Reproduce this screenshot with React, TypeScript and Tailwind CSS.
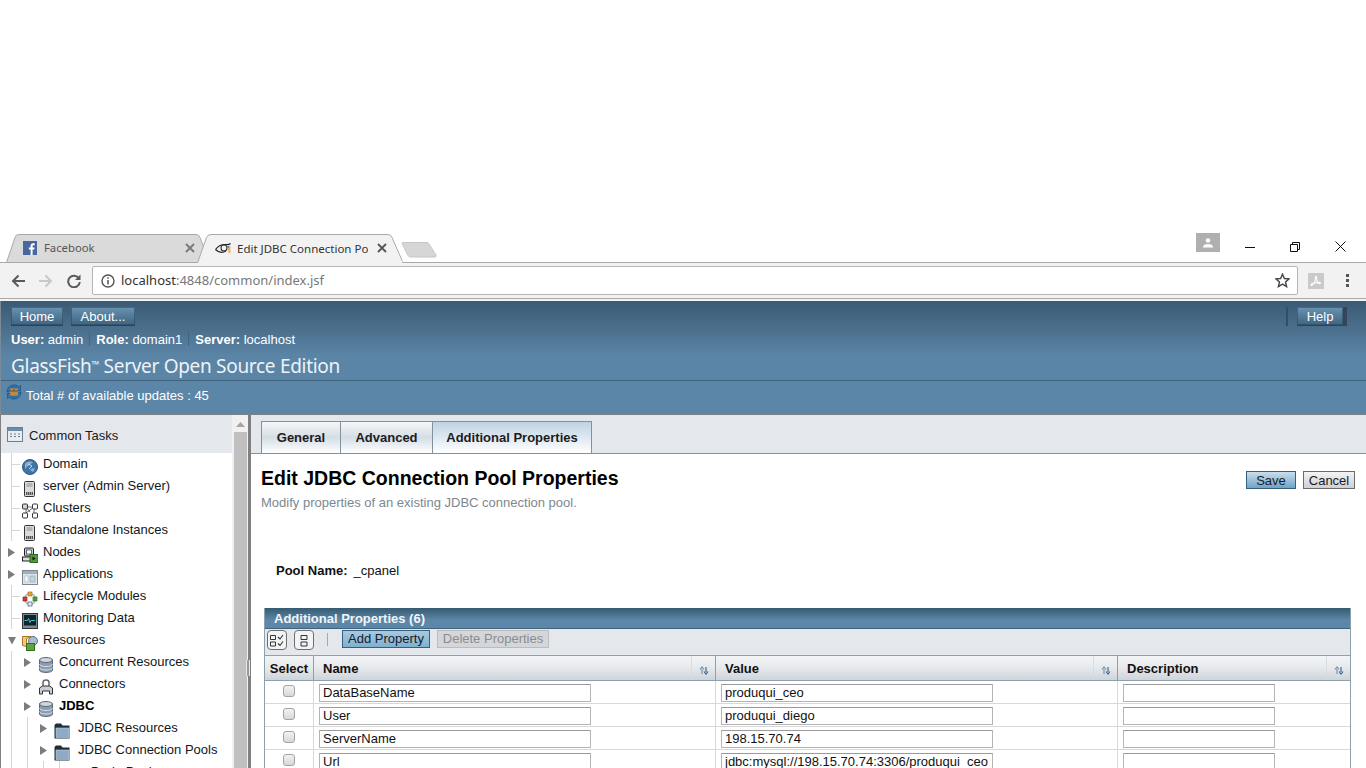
import React from "react";

const Facebook = () => (
  <svg width="14" height="14" viewBox="0 0 14 14" className="shrink-0">
    <rect width="14" height="14" fill="#4a66a0" />
    <path d="M9.6 14V8.6h1.7l.3-2.1h-2V5.2c0-.6.2-1 1-1h1.1V2.3c-.2 0-.8-.1-1.5-.1-1.6 0-2.6 1-2.6 2.7v1.6H5.8v2.1h1.8V14z" fill="#fff" />
  </svg>
);
const EyeFav = () => (
  <svg width="16" height="16" viewBox="0 0 16 16" className="shrink-0">
    <path d="M.5 9.5C3 6 6 4.5 10 4.5c2 0 4 .5 5.5-1" fill="none" stroke="#222" strokeWidth="1.2" />
    <path d="M.5 9.5c3 3 7 3.5 10.500 1.500" fill="none" stroke="#222" strokeWidth="1.2" />
    <circle cx="9" cy="8" r="3" fill="none" stroke="#333" strokeWidth="1.1" />
    <path d="M12.500 6h3v7h-2z" fill="#eeb26a" />
    <circle cx="13" cy="7" r="1.200" fill="#5c8fc4" />
  </svg>
);
const X = ({ c = "#5f6368" }: { c?: string }) => (
  <svg width="10" height="10" viewBox="0 0 10 10" className="shrink-0">
    <path d="M1 1l8 8M9 1l-8 8" stroke={c} strokeWidth="1.800" />
  </svg>
);

const Arrow = ({ down }: { down?: boolean }) => (
  <svg width="8" height="9" viewBox="0 0 8 9" className="shrink-0">
    {down ? <path d="M0 1h8L4 8.500z" fill="#7c7c7c" /> : <path d="M0 0l7 4.500L0 9z" fill="#7c7c7c" />}
  </svg>
);

const I = ({ children }: { children: React.ReactNode }) => (
  <svg width="16" height="16" viewBox="0 0 16 16" className="shrink-0 mt-[6px]">{children}</svg>
);
const Globe = () => (
  <I>
    <circle cx="8" cy="8" r="7.500" fill="#3f74a8" stroke="#2f5a85" />
    <path d="M3 5c2-3 7-3 8-1-2 0-3 2-5 3s-2 4-3 2z" fill="#8fb0cc" />
    <path d="M8 11l3-2 2 1-2 3z" fill="#8fb0cc" />
    <path d="M6 5l4 2-3 3" fill="none" stroke="#e8f0f6" strokeWidth=".8" />
  </I>
);
const Server = () => (
  <I>
    <rect x="2.500" y="0.500" width="10" height="15" rx="1" fill="#d9dcdf" stroke="#333" />
    <path d="M4.500 3h6M4.500 5h6" stroke="#8a8f94" />
    <path d="M4 11h7v3H4z" fill="#555" />
    <path d="M5.500 11v3M7.500 11v3M9.500 11v3" stroke="#ccc" strokeWidth=".6" />
  </I>
);
const Clusters = () => (
  <I>
    <path d="M4 4h8M4 4l4 5M12 4l-8 6M12 4v6M4 4v6" stroke="#444" strokeWidth=".8" fill="none" />
    <rect x="0.500" y="1" width="5" height="5" rx="1" fill="#cfd6dc" stroke="#333" />
    <rect x="10.500" y="1" width="5" height="5" rx="1" fill="#fff" stroke="#333" />
    <rect x="0.500" y="10" width="5" height="5" rx="1" fill="#fff" stroke="#333" />
    <rect x="10.500" y="10" width="5" height="5" rx="1" fill="#fff" stroke="#333" />
  </I>
);
const Nodes = () => (
  <I>
    <rect x="2.500" y="1" width="9" height="8" rx="1" fill="#c7d0d8" stroke="#222" />
    <rect x="4.500" y="3" width="5" height="4" fill="#fff" stroke="#333" strokeWidth=".7" />
    <rect x="0.500" y="10" width="10" height="4" fill="#ddd" stroke="#222" />
    <rect x="8" y="7.500" width="8" height="8" fill="#4d9a3b" stroke="#2a6a20" />
    <path d="M10.500 9.500l3 2-3 2z" fill="#111" />
  </I>
);
const Apps = () => (
  <I>
    <rect x="0.500" y="1.500" width="15" height="14" fill="#dfe4e9" stroke="#7d8790" />
    <rect x="1" y="2" width="14" height="3" fill="#9fb0bf" />
    <rect x="3" y="7" width="3" height="6" fill="#fff" stroke="#aab2b9" strokeWidth=".6" />
    <rect x="8" y="7" width="5" height="6" fill="#c3d2de" stroke="#8ea0ae" strokeWidth=".6" />
  </I>
);
const Lifecycle = () => (
  <I>
    <circle cx="8" cy="8" r="5.500" fill="none" stroke="#9aa5ad" strokeWidth="1.200" />
    <rect x="6" y="1" width="4" height="4" fill="#eea52f" stroke="#94631a" strokeWidth=".6" />
    <rect x="1" y="6" width="4" height="4" fill="#d23a2e" stroke="#7e1c16" strokeWidth=".6" />
    <rect x="11" y="6" width="4" height="4" fill="#47a23c" stroke="#25651e" strokeWidth=".6" />
    <rect x="6" y="11" width="4" height="4" fill="#dfe8ef" stroke="#4b7196" strokeWidth=".8" />
  </I>
);
const Monitor = () => (
  <I>
    <rect x="0.500" y="0.500" width="15" height="15" fill="#7c8a94" stroke="#333" />
    <rect x="2" y="2" width="12" height="10.500" fill="#10222c" />
    <path d="M2.500 7.500h3l1-2 1.500 4 1-2h4" fill="none" stroke="#39c6c9" />
  </I>
);
const Resources = () => (
  <I>
    <path d="M.5 1.500v9l4 1v-8l5-2z" fill="#f3c878" stroke="#a97a22" />
    <circle cx="11" cy="6" r="4.500" fill="#a8bdcf" stroke="#5d7386" />
    <rect x="4.500" y="8.500" width="8" height="7" fill="#5ea43f" stroke="#356f1e" />
  </I>
);
const Db = () => (
  <I>
    <path d="M1.500 3v10c0 1.400 2.900 2.500 6.500 2.500s6.500-1.100 6.500-2.500V3z" fill="#8a9cae" stroke="#59687a" />
    <ellipse cx="8" cy="3" rx="6.500" ry="2.500" fill="#cdd6df" stroke="#59687a" />
    <path d="M1.500 7c0 1.400 2.900 2.500 6.500 2.500s6.500-1.100 6.500-2.500M1.500 10.500c0 1.400 2.900 2.500 6.500 2.500s6.500-1.100 6.500-2.500" fill="none" stroke="#dfe6ec" />
  </I>
);
const Connector = () => (
  <I>
    <path d="M5 7V3.500C5 2 6 1 8 1s3 1 3 2.500V7" fill="none" stroke="#666" strokeWidth="1.500" />
    <path d="M1.500 15V9l3-2h7l3 2v6h-3v-3h-7v3z" fill="#c9ced3" stroke="#333" />
  </I>
);
const Folder = () => (
  <I>
    <path d="M.5 15.500V2l1.500-1.500h5l1.500 2h7v13z" fill="#1f2f3a" />
    <path d="M2 14.500V5h13v9.500z" fill="#8eaac4" stroke="#c6d5e2" strokeWidth=".6" />
  </I>
);
const Pool = () => (
  <I>
    <ellipse cx="8" cy="4" rx="6" ry="2.500" fill="#b9c4ce" stroke="#59687a" />
  </I>
);

type Row = {
  label: string;
  icon: React.ReactNode;
  pad: string;
  arrow?: "r" | "d";
  v?: number[];
  h?: [number, number];
  bold?: boolean;
};
const rows: Row[] = [
  { label: "Domain", icon: <Globe />, pad: "pl-[21px]", v: [11], h: [11, 20] },
  { label: "server (Admin Server)", icon: <Server />, pad: "pl-[21px]", v: [11], h: [11, 20] },
  { label: "Clusters", icon: <Clusters />, pad: "pl-[21px]", v: [11], h: [11, 20] },
  { label: "Standalone Instances", icon: <Server />, pad: "pl-[21px]", v: [11], h: [11, 20] },
  { label: "Nodes", icon: <Nodes />, pad: "pl-[7px]", arrow: "r" },
  { label: "Applications", icon: <Apps />, pad: "pl-[7px]", arrow: "r" },
  { label: "Lifecycle Modules", icon: <Lifecycle />, pad: "pl-[21px]", v: [11], h: [11, 20] },
  { label: "Monitoring Data", icon: <Monitor />, pad: "pl-[21px]", v: [11], h: [11, 20] },
  { label: "Resources", icon: <Resources />, pad: "pl-[7px]", arrow: "d" },
  { label: "Concurrent Resources", icon: <Db />, pad: "pl-[23px]", arrow: "r", v: [11] },
  { label: "Connectors", icon: <Connector />, pad: "pl-[23px]", arrow: "r", v: [11] },
  { label: "JDBC", icon: <Db />, pad: "pl-[23px]", arrow: "r", v: [11], bold: true },
  { label: "JDBC Resources", icon: <Folder />, pad: "pl-[39px]", arrow: "r", v: [11, 27] },
  { label: "JDBC Connection Pools", icon: <Folder />, pad: "pl-[39px]", arrow: "r", v: [11, 27] },
  { label: "DerbyPool", icon: <Pool />, pad: "pl-[69px]", v: [11, 27, 43, 59] },
];

const TreeRow = ({ r }: { r: Row }) => {
  const level3 = r.pad === "pl-[39px]";
  return (
    <div className={`relative flex h-[22px] shrink-0 items-start ${r.pad}`}>
      <svg className="absolute left-[-1px] top-0 pointer-events-none" width="70" height="22">
        {r.v?.map((x) => <line key={x} x1={x + 0.5} x2={x + 0.5} y1="0" y2="22" stroke="#d6d6d6" />)}
        {r.h && <line x1={r.h[0]} x2={r.h[1]} y1="11.500" y2="11.500" stroke="#d6d6d6" />}
      </svg>
      {r.arrow && (
        <span className="relative mt-[7px] flex w-[14px] shrink-0">
          <Arrow down={r.arrow === "d"} />
        </span>
      )}
      <span className="relative flex">{r.icon}</span>
      <span
        className={`relative whitespace-nowrap pt-[2px] text-[13px] leading-[18px] text-[#101820] ${level3 ? "pl-[8px]" : "pl-[5px]"} ${r.bold ? "font-bold text-black" : ""}`}
      >
        {r.label}
      </span>
    </div>
  );
};

const MastBtn = ({ children, w }: { children: React.ReactNode; w: string }) => (
  <div
    className={`flex h-[19px] ${w} items-center justify-center border-b border-[#24455e] bg-gradient-to-b from-[#6b94b3] to-[#3d6480] text-[13px] leading-none text-white shadow-[inset_0_0_0_1px_rgba(40,70,95,.55)]`}
  >
    {children}
  </div>
);

const Tab = ({ children, w, active }: { children: React.ReactNode; w: string; active?: boolean }) => (
  <div
    className={`flex h-[32px] ${w} items-center justify-center border border-b-0 border-[#7f929e] -ml-px first:ml-0 bg-gradient-to-b text-[13px] font-bold text-[#1c1c1c] ${active ? "from-[#bfd2e2] to-white" : "from-[#f6f7f9] via-[#d5dde5] to-white"}`}
  >
    {children}
  </div>
);

const SortIcon = () => (
  <svg width="10" height="9" viewBox="0 0 10 9" className="shrink-0">
    <path d="M3 8V3M1 3.500L3 1l2 2.500" fill="none" stroke="#6d8ea8" strokeWidth="1.100" />
    <path d="M7 1v5M5 5.500L7 8l2-2.500" fill="none" stroke="#2f5f8c" strokeWidth="1.100" />
  </svg>
);

const HeadCell = ({ children, pad, sort }: { children: React.ReactNode; pad?: string; sort?: boolean }) => (
  <div className="flex h-full items-stretch border-r border-[#8ea0ac] last:border-r-0">
    <div className={`flex flex-1 items-center pt-[1px] text-[13px] font-bold text-[#111] ${pad ?? ""}`}>{children}</div>
    {sort && (
      <div className="flex w-[24px] items-center justify-center border-l border-[#d8dde2] pt-[5px]">
        <SortIcon />
      </div>
    )}
  </div>
);

const Field = ({ value, w }: { value: string; w: string }) => (
  <div className={`mt-[1px] flex h-[18px] ${w} items-center overflow-hidden border border-[#b5b5b5] border-t-[#9a9a9a] bg-white pl-[3px] text-[13px] leading-none whitespace-nowrap text-[#111]`}>
    {value}
  </div>
);

const Check = () => (
  <span className="mt-[-3px] block h-[12px] w-[12px] rounded-[3px] border border-[#a3a3a3] bg-gradient-to-b from-[#f2f2f2] to-[#d8d8d8]" />
);

const data = [
  ["DataBaseName", "produqui_ceo"],
  ["User", "produqui_diego"],
  ["ServerName", "198.15.70.74"],
  ["Url", "jdbc:mysql://198.15.70.74:3306/produqui_ceo"],
];

export default function App() {
  return (
    <div className="flex h-[768px] w-[1366px] flex-col overflow-hidden bg-white font-['Liberation_Sans',Arial,sans-serif]">
      <div className="h-[233px] shrink-0 bg-white" />

      {/* Tab strip */}
      <div className="relative z-10 flex h-[29px] shrink-0 items-start font-['Noto_Sans',sans-serif]">
        <svg className="absolute left-0 top-0" width="440" height="30" viewBox="0 0 440 30">
          <path d="M6.500 29.500L15 4.500Q15.500 1.500 19 1.500H196Q199 1.500 200 4.500L205 18L201 29.500Z" fill="#dadada" stroke="#a9a9a9" />
          <path d="M197.500 30L206.500 4.500Q207.500 1.500 211 1.500H388Q391 1.500 392 4.500L402.500 30Z" fill="#f2f2f2" />
          <path d="M197.500 30L206.500 4.500Q207.500 1.500 211 1.500H388Q391 1.500 392 4.500L402.500 28.500" fill="none" stroke="#a9a9a9" />
          <path d="M402 10.500Q402 9.500 403 9.500H427Q428 9.500 429 11L436 22Q436.500 24 435 24H411Q409 24 408 22.500Z" fill="#d6d6d6" stroke="#c6c6c6" />
        </svg>
        <div className="relative ml-[23px] mt-[8px] flex w-[172px] items-center">
          <Facebook />
          <span className="ml-[7px] flex-1 text-[11.3px] leading-[14px] text-[#555]">Facebook</span>
          <X c="#777" />
        </div>
        <div className="relative ml-[20px] mt-[7px] flex w-[173px] items-center">
          <EyeFav />
          <span className="ml-[6px] w-[131px] overflow-hidden text-[11.5px] leading-[15px] whitespace-nowrap text-[#333]">Edit JDBC Connection Po</span>
          <span className="ml-[9px]"><X c="#555" /></span>
        </div>
        <div className="flex-1" />
        <div className="relative flex h-[19px] w-[24px] items-center justify-center bg-[#b0b0b0]">
          <svg width="12" height="10" viewBox="0 0 12 10">
            <circle cx="6" cy="2.500" r="2.200" fill="#fff" />
            <path d="M1 9.500c0-2.500 2.500-3.500 5-3.500s5 1 5 3.500z" fill="#fff" />
          </svg>
        </div>
        <div className="relative flex w-[146px] items-center justify-between pl-[25px] pr-[20px] pt-[8px]">
          <svg width="10" height="10" viewBox="0 0 10 10"><path d="M0 5.500h10" stroke="#111" /></svg>
          <svg width="10" height="10" viewBox="0 0 10 10"><path d="M.5 2.500h7v7h-7zM2.500 2.500v-2h7v7h-2" fill="none" stroke="#111" /></svg>
          <svg width="11" height="11" viewBox="0 0 11 11"><path d="M.5.500l10 10M10.500.500l-10 10" stroke="#111" /></svg>
        </div>
      </div>

      {/* Toolbar */}
      <div className="flex h-[37px] shrink-0 items-center border-y border-[#a9a9a9] bg-[#f2f2f2] font-['Noto_Sans',sans-serif]">
        <div className="ml-[11px] flex w-[81px] items-center gap-[14px]">
          <svg width="14" height="14" viewBox="0 0 14 14"><path d="M14 7H2M7.500 1.500L2 7l5.500 5.500" fill="none" stroke="#5a5a5a" strokeWidth="2" /></svg>
          <svg width="14" height="14" viewBox="0 0 14 14"><path d="M0 7h12M6.500 1.500L12 7l-5.500 5.500" fill="none" stroke="#c8c8c8" strokeWidth="2" /></svg>
          <svg width="14" height="14" viewBox="0 0 14 14"><path d="M12 4.500A5.800 5.800 0 1 0 12.800 8" fill="none" stroke="#5a5a5a" strokeWidth="2" /><path d="M13.500.500v5.500H8z" fill="#5a5a5a" /></svg>
        </div>
        <div className="flex h-[29px] w-[1206px] items-center rounded-[2px] border border-[#b5b5b5] bg-white pl-[8px] pr-[7px]">
          <svg width="14" height="14" viewBox="0 0 14 14" className="shrink-0">
            <circle cx="7" cy="7" r="6" fill="none" stroke="#555" strokeWidth="1.400" />
            <path d="M7 6v4.500M7 3.200v1.600" stroke="#555" strokeWidth="1.500" />
          </svg>
          <span className="ml-[6px] flex-1 text-[13px] leading-none text-[#777]">
            <span className="text-[#333]">localhost</span>:4848/common/index.jsf
          </span>
          <svg width="15" height="15" viewBox="0 0 15 15" className="shrink-0">
            <path d="M7.500 1.200l1.900 4.300 4.700.4-3.600 3.100 1.100 4.600-4.100-2.500-4.100 2.500 1.100-4.600L.9 5.900l4.700-.4z" fill="none" stroke="#444" strokeWidth="1.400" />
          </svg>
        </div>
        <div className="ml-[10px] flex h-[16px] w-[16px] items-center justify-center bg-[#cacaca]">
          <svg width="12" height="12" viewBox="0 0 12 12"><path d="M6 1c-1 0 0 4-1.500 6.500S1 11 1 10c0-1.500 5-3 9-2.500 1 .2.500 1.500-1 1C7 8 6.500 3 6.500 2 6.500 1.200 6.300 1 6 1z" fill="none" stroke="#fff" strokeWidth="1.100" /></svg>
        </div>
        <div className="ml-[22px] flex flex-col gap-[2px]">
          <span className="h-[3px] w-[3px] bg-[#555]" />
          <span className="h-[3px] w-[3px] bg-[#555]" />
          <span className="h-[3px] w-[3px] bg-[#555]" />
        </div>
      </div>
      <div className="h-[2px] shrink-0 bg-[#f2f2f2]" />

      {/* Masthead */}
      <div className="flex h-[113px] shrink-0 flex-col border-l border-[#7a8a96] bg-[#5b86a7] text-white">
        <div className="h-[79px] bg-gradient-to-b from-[#3b5a74] to-[#5b85a6] to-70% pl-[10px]">
          <div className="flex items-center pt-[6px] pr-[19px]">
            <MastBtn w="w-[52px]">Home</MastBtn>
            <div className="w-[8px]" />
            <MastBtn w="w-[64px]">About...</MastBtn>
            <div className="flex-1" />
            <div className="mr-[9px] h-[19px] w-[2px] bg-[#304f68]" />
            <MastBtn w="w-[46px]">Help</MastBtn>
            <div className="h-[19px] w-[4px] bg-[#33465c]" />
          </div>
          <div className="mt-[5px] flex h-[16px] items-center text-[13px] leading-none text-white">
            <span><b>User:</b> admin</span>
            <span className="mx-[6px] h-[14px] w-px bg-[#3f6580]" />
            <span><b>Role:</b> domain1</span>
            <span className="mx-[6px] h-[14px] w-px bg-[#3f6580]" />
            <span><b>Server:</b> localhost</span>
          </div>
          <div className="mt-[6px] font-['Noto_Sans',sans-serif] text-[19px] leading-[26px] tracking-[-0.3px] whitespace-nowrap text-[#eef3f7]">
            GlassFish<sup className="text-[10px] leading-none font-bold">™</sup> Server Open Source Edition
          </div>
        </div>
        <div className="h-px bg-[#3f627d]" />
        <div className="flex h-[32px] items-start pl-[5px] pt-[3px]">
          <svg width="16" height="16" viewBox="0 0 16 16" className="shrink-0">
            <path d="M1 8a7 7 0 0 1 12-5l1.500-1.500V6.500H9.500l2-2A5 5 0 0 0 3 8z" fill="#2f78b8" stroke="#123f66" strokeWidth=".5" />
            <path d="M15 8a7 7 0 0 1-12 5l-1.500 1.500V9.500h5l-2 2A5 5 0 0 0 13 8z" fill="#2f78b8" stroke="#123f66" strokeWidth=".5" />
            <rect x="4" y="4.500" width="8" height="7" fill="#b88a4e" />
            <path d="M4 7h8M8 4.500V7" stroke="#6f4f24" />
          </svg>
          <span className="ml-[4px] pt-[4px] text-[13px] leading-[16px] text-white">Total # of available updates : 45</span>
        </div>
      </div>

      {/* Body */}
      <div className="flex min-h-0 flex-1 border-t border-[#808080]">
        <div className="relative flex w-[251px] shrink-0 border-r-[3px] border-l border-[#808080]">
          <div className="flex w-[231px] shrink-0 flex-col overflow-hidden">
            <div className="flex h-[38px] shrink-0 items-center bg-[#e4e7ec] pl-[6px]">
              <svg width="16" height="15" viewBox="0 0 16 15" className="shrink-0">
                <rect x=".5" y=".5" width="15" height="14" fill="#e8edf2" stroke="#6d7f8f" />
                <rect x="1" y="1" width="14" height="3" fill="#6e8ba5" />
                <path d="M3 7h2M7 7h2M11 7h2M3 9.500h2M7 9.500h2M11 9.500h2" stroke="#6d7f8f" />
              </svg>
              <span className="ml-[6px] pt-[2px] text-[13px] leading-none text-[#1a1a1a]">Common Tasks</span>
            </div>
            {rows.map((r) => <TreeRow key={r.label} r={r} />)}
          </div>
          <div className="flex w-[16px] shrink-0 flex-col items-center bg-[#f1f1f1]">
            <svg width="9" height="5" viewBox="0 0 9 5" className="mt-[7px] shrink-0"><path d="M0 5L4.500 0 9 5z" fill="#a3a3a3" /></svg>
            <div className="mt-[5px] w-[13px] flex-1 bg-[#c0c0c0]" />
          </div>
          <div className="absolute right-[-2px] top-[245px] h-[16px] w-[4px] border-x border-[#e6e6e6] bg-[#9a9a9a]" />
        </div>

        <div className="flex min-w-0 flex-1 flex-col">
          <div className="flex h-[39px] shrink-0 items-end border-b border-[#7f929e] bg-[#e4e7ec] pl-[10px]">
            <Tab w="w-[80px]">General</Tab>
            <Tab w="w-[93px]">Advanced</Tab>
            <Tab w="w-[160px]" active>Additional Properties</Tab>
          </div>
          <div className="flex items-start justify-between pl-[10px] pr-[11px] pt-[12px]">
            <div>
              <div className="text-[19.500px] leading-[24px] font-bold text-black">Edit JDBC Connection Pool Properties</div>
              <div className="mt-[5px] text-[13px] leading-[16px] text-[#7d8790]">Modify properties of an existing JDBC connection pool.</div>
            </div>
            <div className="flex gap-[7px] pt-[5px]">
              <div className="flex h-[18px] w-[50px] items-center justify-center border border-[#35617f] bg-gradient-to-b from-[#c9deec] to-[#6fa3c6] text-[13px] leading-none text-[#14222c]">Save</div>
              <div className="flex h-[18px] w-[52px] items-center justify-center border border-[#6a6a6a] bg-gradient-to-b from-[#f4f4f6] to-[#cfcfd6] text-[13px] leading-none text-[#1a1a1a]">Cancel</div>
            </div>
          </div>
          <div className="flex items-center pl-[25px] pt-[52px] text-[13px] leading-[16px] text-[#111]">
            <span className="font-bold">Pool Name:</span>
            <span className="ml-[6px]">_cpanel</span>
          </div>

          <div className="mt-[29px] ml-[13px] w-[1087px] flex-1 border-x border-[#8ea0ac]">
            <div className="flex h-[21px] items-center border-b border-[#3f627d] bg-gradient-to-b from-[#375a72] to-[#5c87a8] to-60% pl-[9px] text-[13px] leading-none font-bold text-[#f2f5f8]">
              Additional Properties (6)
            </div>
            <div className="flex h-[27px] items-start border-b border-[#8ea0ac] bg-[#e4e7ec] pl-[2px] pt-[1px]">
              <div className="flex h-[20px] w-[20px] items-center justify-center rounded-[4px] border border-[#6f6f6f] bg-[#f2f3f5]">
                <svg width="14" height="13" viewBox="0 0 14 13">
                  <path d="M.5 1.500h5v4h-5zM.5 8h5v4h-5z" fill="none" stroke="#333" />
                  <path d="M8 3l2 2 3-4M8 9.500l2 2 3-4" fill="none" stroke="#333" strokeWidth="1.100" />
                </svg>
              </div>
              <div className="ml-[7px] flex h-[20px] w-[20px] items-center justify-center rounded-[4px] border border-[#6f6f6f] bg-[#f2f3f5]">
                <svg width="8" height="13" viewBox="0 0 8 13">
                  <path d="M1 1.500h6v4H1zM1 8h6v4H1z" fill="none" stroke="#333" />
                </svg>
              </div>
              <div className="ml-[13px] mt-[3px] h-[13px] w-px bg-[#a8a8a8]" />
              <div className="ml-[14px] flex h-[18px] w-[88px] items-center justify-center border border-[#34617f] bg-gradient-to-b from-[#a9c9df] to-[#7fb0d0] pb-[2px] text-[13px] leading-none text-[#13212c]">Add Property</div>
              <div className="ml-[7px] flex h-[18px] w-[112px] items-center justify-center border border-[#bcbcbc] bg-[#d4d6d9] pb-[2px] text-[13px] leading-none text-[#8a8d90]">Delete Properties</div>
            </div>
            <div className="grid h-[25px] grid-cols-[49px_402px_402px_1fr] border-b border-[#8ea0ac] bg-gradient-to-b from-[#f3f4f6] via-[#e6e9ec] to-[#ced4da]">
              <HeadCell><span className="w-full text-center">Select</span></HeadCell>
              <HeadCell pad="pl-[9px]" sort>Name</HeadCell>
              <HeadCell pad="pl-[9px]" sort>Value</HeadCell>
              <HeadCell pad="pl-[9px]" sort>Description</HeadCell>
            </div>
            {data.map(([n, v]) => (
              <div key={n} className="grid h-[23px] grid-cols-[49px_402px_402px_1fr] border-b border-[#d8d8d8]">
                <div className="flex items-center justify-center border-r border-[#d8d8d8]"><Check /></div>
                <div className="flex items-center border-r border-[#d8d8d8] pl-[5px]"><Field value={n} w="w-[272px]" /></div>
                <div className="flex items-center border-r border-[#d8d8d8] pl-[5px]"><Field value={v} w="w-[272px]" /></div>
                <div className="flex items-center pl-[5px]"><Field value="" w="w-[152px]" /></div>
              </div>
            ))}
          </div>
        </div>
      </div>
    </div>
  );
}
